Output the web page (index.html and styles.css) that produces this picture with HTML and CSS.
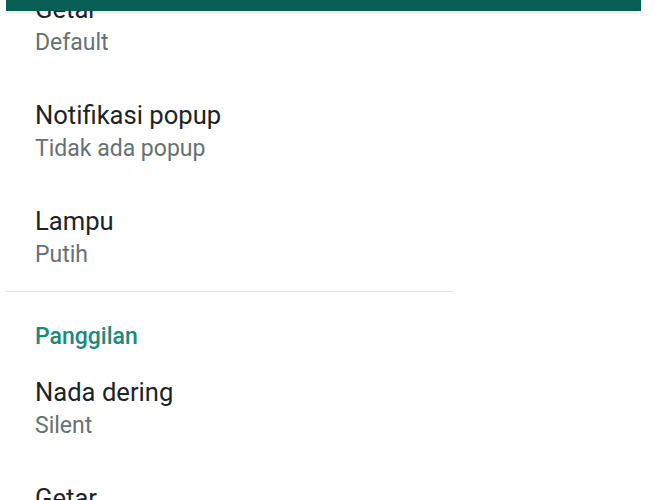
FILE: index.html
```html
<html>
  <head>
    <title>Notifikasi</title>
    <link rel="stylesheet" href="styles.css">
  </head>
  <body>
    <div class="screen">
      <div class="toolbar"></div>
      <div class="pref-list">
        <div class="pref-item">
          <div class="pref-title">Getar</div>
          <div class="pref-summary">Default</div>
        </div>
        <div class="pref-item">
          <div class="pref-title">Notifikasi popup</div>
          <div class="pref-summary">Tidak ada popup</div>
        </div>
        <div class="pref-item">
          <div class="pref-title">Lampu</div>
          <div class="pref-summary">Putih</div>
        </div>
        <div class="pref-divider"></div>

        <div class="pref-category">Panggilan</div>
        <div class="pref-item">
          <div class="pref-title">Nada dering</div>
          <div class="pref-summary">Silent</div>
        </div>
        <div class="pref-item">
          <div class="pref-title">Getar</div>
          <div class="pref-summary">Default</div>
        </div>
      </div>
    </div>
  </body>
</html>
```

FILE: styles.css
```css
* {
  margin: 0;
  padding: 0;
  box-sizing: border-box;
}
body {
  background-color: #ffffff;
  font-family: Roboto, "Noto Sans", sans-serif;
  overflow: hidden;
}
.screen {
  position: relative;
  width: 635px;
  height: 500px;
  margin-left: 6px;
  overflow: hidden;
  background-color: #ffffff;
}
.toolbar {
  position: absolute;
  top: 0;
  left: 0;
  right: 0;
  height: 11px;
  background-color: #075e54;
  box-shadow: 0 2px 4px rgba(0, 0, 0, 0.12);
  z-index: 2;
}
.pref-list {
  margin-top: -27px;
  display: flex;
  flex-direction: column;
}
.pref-item {
  padding: 20px 29px 21px 29px;
}
.pref-title {
  font-size: 25.6px;
  line-height: 32px;
  color: #1c2429;
}
.pref-summary {
  margin-top: 3px;
  font-size: 23px;
  line-height: 30px;
  color: #667176;
}
.pref-divider {
  width: 448px;
  height: 1px;
  background-color: #e6e6e6;
}
.pref-category {
  padding: 30px 29px 4px 29px;
  font-size: 23px;
  line-height: 30px;
  font-weight: 500;
  color: #1a8a7b;
}
```
